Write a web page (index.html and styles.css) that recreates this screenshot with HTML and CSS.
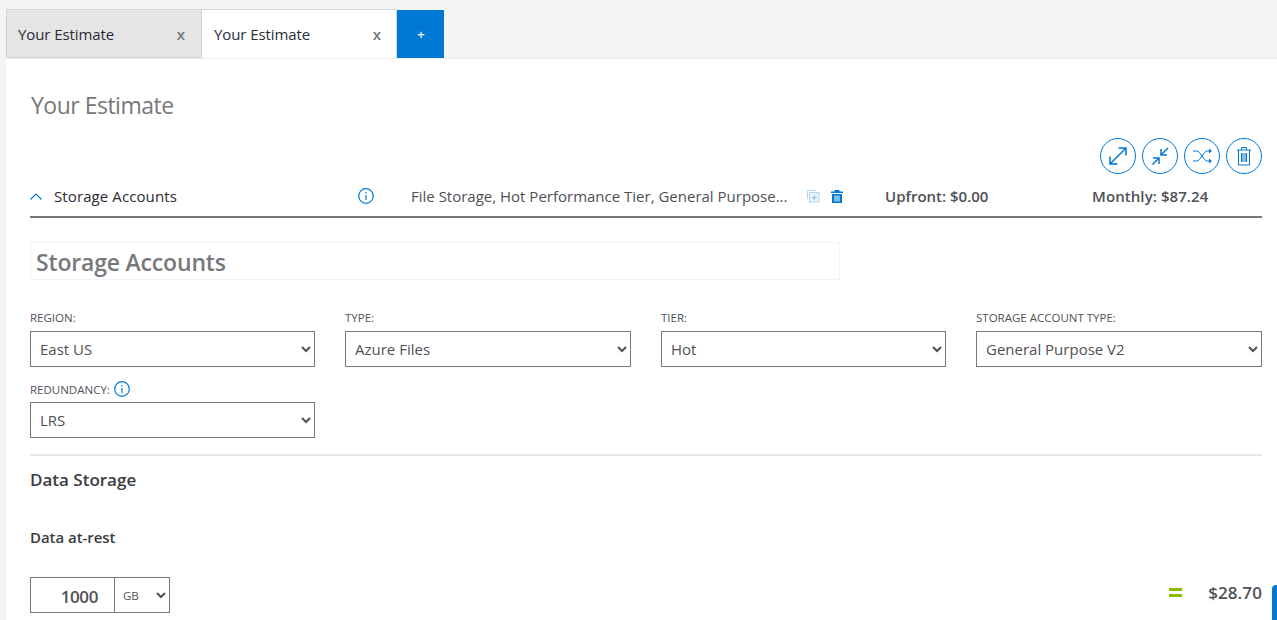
FILE: index.html
```html
<!DOCTYPE html>
<html lang="en">
<head>
<meta charset="utf-8">
<title>Your Estimate</title>
<link rel="stylesheet" href="styles.css">
</head>
<body>
<nav class="tabbar">
  <div class="tab tab-inactive"><span>Your Estimate</span><span class="tab-x">x</span></div>
  <div class="tab tab-active"><span>Your Estimate</span><span class="tab-x">x</span></div>
  <button class="tab-add">+</button>
</nav>
<main class="content">
  <h1 class="page-title">Your Estimate</h1>
  <div class="actions">
    <button class="round-btn" aria-label="Expand all"><svg viewBox="0 0 24 24" width="24" height="24" class="ic"><path d="M4 20 20 4M12.500 4H20v7.500M4 12.500V20h7.500"/></svg></button>
    <button class="round-btn" aria-label="Collapse all"><svg viewBox="0 0 24 24" width="24" height="24" class="ic"><path d="M20 4 13 11M13 5v6h6M4.500 20.500 11 14M5 14h6v6"/></svg></button>
    <button class="round-btn" aria-label="Shuffle"><svg viewBox="0 0 24 24" width="24" height="24" class="ic ic-thin"><path d="M3 7h3.500c4.500 0 6.500 10 11 10H21M3 17h3.500c4.500 0 6.500-10 11-10H21"/><path class="solid" d="M19 4.500 22 7l-3 2.500zM19 14.500 22 17l-3 2.500z"/></svg></button>
    <button class="round-btn" aria-label="Delete all"><svg viewBox="0 0 24 24" width="24" height="24" class="ic ic-thin"><path d="M5 6h14M9.500 6V3.500h5V6M6.500 6v15h11V6M9.500 9v9M11 9v9M13 9v9M14.500 9v9"/></svg></button>
  </div>
  <div class="summary">
    <svg class="chev" viewBox="0 0 12 7" width="12" height="7"><path d="M.5 6.500 6 1l5.500 5.500"/></svg>
    <span class="summary-name">Storage Accounts</span>
    <svg class="info info-summary" viewBox="0 0 16 16" width="16" height="16"><circle cx="8" cy="8" r="7.300"/><path d="M8 7v5M8 4v1.500"/></svg>
    <span class="summary-desc">File Storage, Hot Performance Tier, General Purpose...</span>
    <svg class="mini mini-copy" viewBox="0 0 14 14" width="14" height="14"><path d="M1.500 10V1.500H10" /><rect x="3.500" y="3.500" width="9.500" height="9.500"/><path class="plus" d="M8.250 6v5M5.750 8.500h5"/></svg>
    <svg class="mini mini-trash" viewBox="0 0 14 14" width="14" height="14"><path class="fill" d="M1 2.500h3.500V1h5v1.500H13V4H1zM2 5h10v9H2z"/><path class="cut" d="M5 6.500v6M7 6.500v6M9 6.500v6"/></svg>
    <span class="summary-up">Upfront: $0.00</span>
    <span class="summary-month">Monthly: $87.24</span>
  </div>
  <div class="name-box">Storage Accounts</div>
  <div class="fields">
    <label class="field"><span class="field-label">REGION:</span><select class="sel"><option>East US</option></select></label>
    <label class="field"><span class="field-label">TYPE:</span><select class="sel"><option>Azure Files</option></select></label>
    <label class="field"><span class="field-label">TIER:</span><select class="sel"><option>Hot</option></select></label>
    <label class="field"><span class="field-label">STORAGE ACCOUNT TYPE:</span><select class="sel"><option>General Purpose V2</option></select></label>
    <label class="field"><span class="field-label field-label-info">REDUNDANCY: <svg class="info info-small" viewBox="0 0 16 16" width="16" height="16"><circle cx="8" cy="8" r="7.300"/><path d="M8 7v5M8 4v1.500"/></svg></span><select class="sel"><option>LRS</option></select></label>
  </div>
  <hr class="divider">
  <h2 class="section-title">Data Storage</h2>
  <h3 class="sub-title">Data at-rest</h3>
  <div class="calc-row">
    <div class="qty"><input class="qty-input" value="1000"><select class="qty-unit"><option>GB</option></select></div>
    <div class="calc-result"><span class="equals"></span><span class="price">$28.70</span></div>
  </div>
</main>
<div class="corner-widget"></div>
</body>
</html>
```
FILE: styles.css
```css
* { box-sizing: border-box; }
html, body { margin: 0; height: 620px; overflow: hidden; }
body {
  background: #f3f4f6;
  font-family: "Open Sans", "Noto Sans", sans-serif;
  color: #3c3c41;
  padding-left: 6px;
  position: relative;
}
.tabbar { display: flex; height: 59px; padding-top: 9px; border-bottom: 1px solid #eceded; }
.tab {
  width: 195px;
  height: 49px;
  display: flex;
  align-items: center;
  justify-content: space-between;
  padding: 0 15px 0 12px;
  font-size: 15px;
  letter-spacing: -0.08px;
  color: #2a2a35;
  border-top: 1px solid #d4d4d4;
  border-bottom: 1px solid transparent;
}
.tab-inactive { width: 196px; background: #e5e5e5; border-left: 1px solid #d4d4d4; border-right: 1px solid #d4d4d4; border-bottom-color: #d4d4d4; padding: 0 16px 0 11px; }
.tab-active { background: #fff; border-right: 1px solid #d4d4d4; }
.tab-x { color: #77777c; font-weight: 600; font-size: 15px; }
.tab-add {
  width: 47px;
  height: 48px;
  margin-top: 1px;
  border: 0;
  background: #0078d4;
  color: #fff;
  font: 600 13px "Open Sans", sans-serif;
  padding: 0 0 0 1px;
}
.content { background: #fff; height: 561px; padding: 30px 15px 0 24px; position: relative; overflow: hidden; }
.page-title { margin: 0 0 0 1px; font-size: 23px; line-height: 32px; font-weight: 400; color: #77777c; letter-spacing: -0.5px; }
.actions { display: flex; justify-content: flex-end; gap: 6px; margin-top: 17px; }
.round-btn {
  width: 36px;
  height: 36px;
  border: 1px solid #0078d4;
  border-radius: 50%;
  background: #fff;
  padding: 0;
  display: flex;
  align-items: center;
  justify-content: center;
}
.ic { fill: none; stroke: #0078d4; stroke-width: 1.500; }
.ic-thin { stroke-width: 1; }
.ic .solid { fill: #0078d4; stroke: none; }
.summary {
  display: flex;
  align-items: center;
  height: 42px;
  margin-top: 2px;
  border-bottom: 2px solid #77777c;
  font-size: 15px;
}
.chev { flex: none; fill: none; stroke: #0078d4; stroke-width: 1.200; margin-right: 12px; }
.summary-name { width: 304px; color: #2a2a35; flex: none; letter-spacing: 0.1px; }
.info { flex: none; fill: none; stroke: #0078d4; stroke-width: 1.200; }
.info-summary { margin-right: 37px; }
.summary-desc { width: 395px; flex: none; color: #505055; white-space: nowrap; }
.mini { flex: none; fill: none; }
.mini-copy { stroke: #b5d6f0; stroke-width: 1; margin-right: 10px; }
.mini-copy rect { fill: #eaf4fb; }
.mini-copy .plus { stroke: #8fc1e9; }
.mini-trash .fill { fill: #0078d4; }
.mini-trash .cut { stroke: #fff; stroke-width: 1; }
.summary-up { width: 207px; margin-left: 41px; flex: none; font-weight: 600; color: #505055; }
.summary-month { flex: none; font-weight: 600; color: #505055; letter-spacing: 0.08px; }
.name-box {
  width: 810px;
  height: 38px;
  margin-top: 24px;
  border: 1px solid #f3f3f3;
  padding-left: 5px;
  font-size: 23px;
  line-height: 39px;
  font-weight: 600;
  color: #77777c;
  letter-spacing: -0.18px;
}
.fields { display: grid; grid-template-columns: 285px 286px 285px 286px; column-gap: 30px; row-gap: 13px; margin-top: 29px; }
.field { display: flex; flex-direction: column; }
.field-label {
  display: flex;
  align-items: center;
  gap: 1px;
  height: 22px;
  font-size: 11.500px;
  padding-bottom: 6px;
  color: #505055;
  white-space: pre;
}
.field-label-info { padding-bottom: 4px; }
.sel {
  width: 100%;
  height: 36px;
  border: 1px solid #77777c;
  border-radius: 0;
  background-color: #fff;
  color: #505055;
  font: 15px "Open Sans", sans-serif;
  padding-left: 5px;
}
.divider { border: 0; height: 2px; background: #e8e8e8; margin: 16px 0 0; }
.section-title { margin: 12px 0 0; font-size: 17px; line-height: 24px; font-weight: 600; color: #3c3c41; }
.sub-title { margin: 35px 0 0; font-size: 15px; line-height: 20px; font-weight: 600; color: #3c3c41; letter-spacing: -0.05px; }
.calc-row { display: flex; justify-content: space-between; align-items: center; margin-top: 30px; }
.qty { display: flex; width: 140px; height: 36px; border: 1px solid #77777c; }
.qty-input {
  width: 84px;
  border: 0;
  border-right: 1px solid #77777c;
  padding: 3px 16px 0 0;
  text-align: right;
  font: 600 17px "Open Sans", sans-serif;
  letter-spacing: -0.4px;
  color: #505055;
  min-width: 0;
}
.qty-unit { flex: 1; min-width: 0; border: 0; background: #fff; font: 11.500px "Open Sans", sans-serif; color: #505055; padding-left: 4px; }
.calc-result { display: flex; align-items: center; gap: 26px; margin-bottom: 6px; }
.equals { width: 13px; height: 9px; border-top: 3px solid #8cbd00; border-bottom: 3px solid #8cbd00; }
.price { font-size: 17px; font-weight: 600; color: #505055; letter-spacing: 0.1px; }
.corner-widget {
  position: absolute;
  left: 1272px;
  top: 585px;
  width: 5px;
  height: 35px;
  background: #0078d4;
  border-top-left-radius: 4px;
}
```
